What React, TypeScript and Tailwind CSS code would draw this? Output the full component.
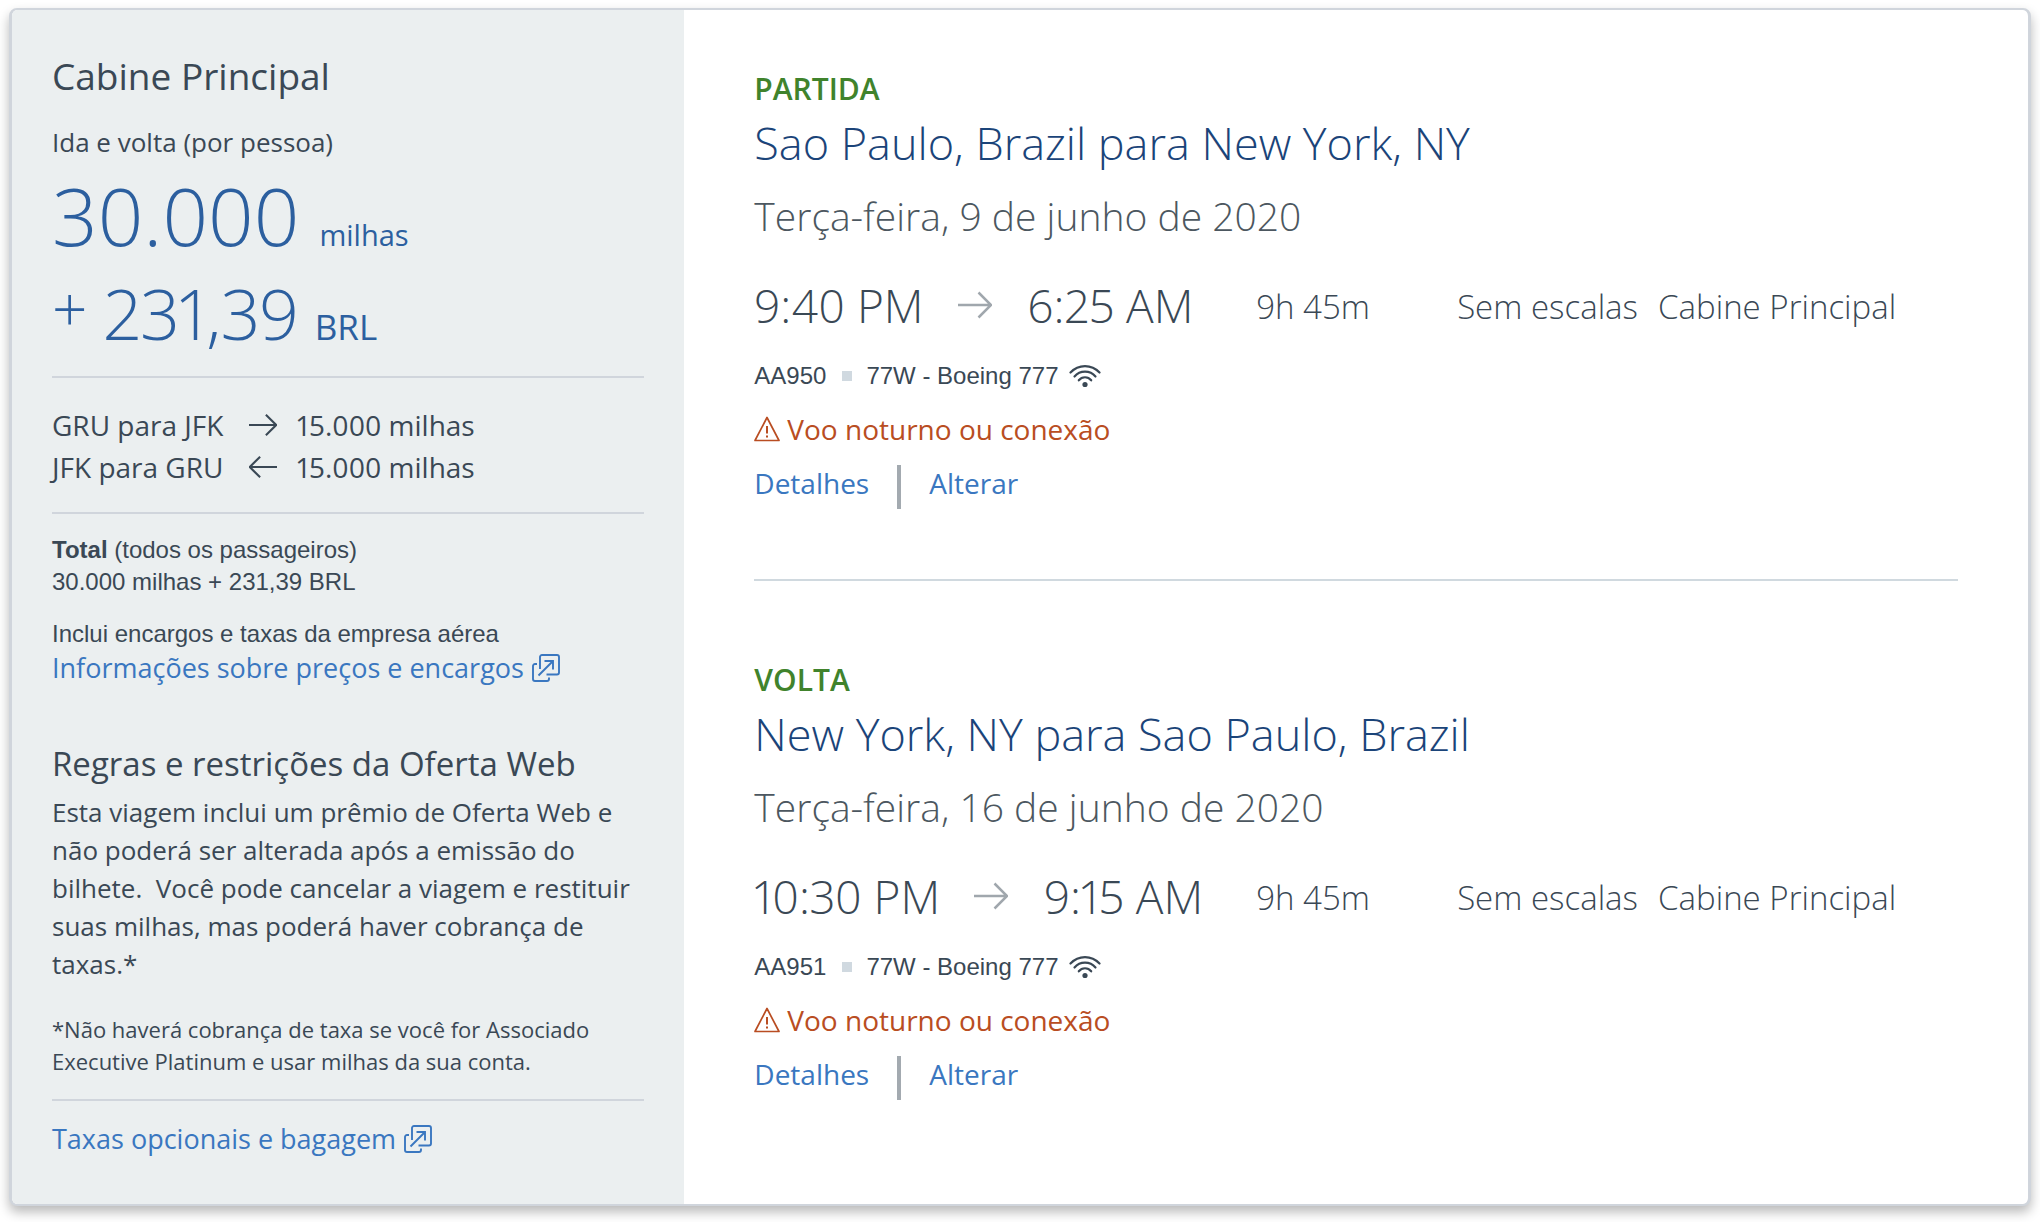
type IconProps = { className?: string };

function ArrowIcon({ className }: IconProps) {
  return (
    <svg viewBox="0 0 34 34" className={className} fill="none" stroke="currentColor" aria-hidden="true">
      <path d="M0 17H32.500M20.500 4.500L33 17L20.500 29.500" />
    </svg>
  );
}

function ExternalIcon() {
  return (
    <svg viewBox="0 0 28 28" className="size-7 shrink-0" fill="none" stroke="currentColor" strokeWidth="1.900" aria-hidden="true">
      <path d="M8 15V3a2 2 0 0 1 2-2H25a2 2 0 0 1 2 2V18.500a2 2 0 0 1-2 2H14.500" />
      <path d="M5 10H3a2 2 0 0 0-2 2V25a2 2 0 0 0 2 2H15a2 2 0 0 0 2-2V23.500" />
      <path d="M6.500 21.500L20.500 7.500M12.500 7H21V15.500" />
    </svg>
  );
}

function WifiIcon() {
  return (
    <svg viewBox="0 0 32 24" className="h-6 w-8 shrink-0" fill="none" stroke="currentColor" strokeWidth="2.200" strokeLinecap="round" role="img" aria-label="Wi-Fi">
      <path d="M1.500 8.500C9.500 0 22.500 0 30.500 8.500" />
      <path d="M5.500 12.500C11 6 21 6 26.500 12.500" />
      <path d="M9.800 16.300C13 12.200 19 12.200 22.200 16.300" />
      <circle cx="16" cy="20.500" r="2.600" fill="currentColor" stroke="none" />
    </svg>
  );
}

function WarningIcon() {
  return (
    <svg viewBox="0 0 26 26" className="size-[26px] shrink-0" fill="none" stroke="currentColor" strokeWidth="1.700" strokeLinejoin="round" aria-hidden="true">
      <path d="M13 1.500L25 24.500H1Z" />
      <path d="M13 10V17.500M13 19.500V21.500" strokeWidth="2" />
    </svg>
  );
}

type Flight = {
  label: string;
  route: string;
  date: string;
  departs: string;
  arrives: string;
  number: string;
};

const flights: Flight[] = [
  {
    label: 'PARTIDA',
    route: 'Sao Paulo, Brazil para New York, NY',
    date: 'Terça-feira, 9 de junho de 2020',
    departs: '9:40 PM',
    arrives: '6:25 AM',
    number: 'AA950',
  },
  {
    label: 'VOLTA',
    route: 'New York, NY para Sao Paulo, Brazil',
    date: 'Terça-feira, 16 de junho de 2020',
    departs: '10:30 PM',
    arrives: '9:15 AM',
    number: 'AA951',
  },
];

function FlightSection({ flight }: { flight: Flight }) {
  return (
    <section>
      <h2 className="text-[30px] leading-10 font-semibold text-[#40832c]">{flight.label}</h2>
      <h3 className="mt-1.5 text-[45px] leading-[56px] text-[#1b4479]">{flight.route}</h3>
      <p className="mt-5 text-[39px] leading-[50px] text-[#4c5760]">{flight.date}</p>
      <div className="mt-8 grid grid-cols-[502fr_201fr_201fr_300fr] items-center text-[33px] leading-[60px]">
        <div className="flex items-center text-[46px] proportional-nums">
          <span>{flight.departs}</span>
          <ArrowIcon className="mr-9 ml-[34px] size-[34px] stroke-[2.5] text-[#a0a7ad]" />
          <span>{flight.arrives}</span>
        </div>
        <span className="pt-1 whitespace-nowrap">9h 45m</span>
        <span className="pt-1 whitespace-nowrap">Sem escalas</span>
        <span className="pt-1 whitespace-nowrap">Cabine Principal</span>
      </div>
      <div className="mt-[23px] flex items-center font-['Liberation_Sans',Arial,sans-serif] text-[24px] leading-8 font-normal">
        <span>{flight.number}</span>
        <span className="mr-3.5 ml-4 size-2.5 bg-[#d0d9e0]" />
        <span className="mr-2.5">77W - Boeing 777</span>
        <WifiIcon />
      </div>
      <p className="mt-[17px] flex items-center gap-[7px] text-[28px] leading-10 font-normal text-[#b94d22]">
        <WarningIcon />
        Voo noturno ou conexão
      </p>
      <div className="mt-4 flex h-11 items-start text-[28px] leading-9 font-normal text-[#3a77c0]">
        <a href="#detalhes">Detalhes</a>
        <span className="mx-7 h-full w-1 bg-[#a3aab0]" />
        <a href="#alterar">Alterar</a>
      </div>
    </section>
  );
}

export default function App() {
  return (
    <main className="min-h-screen bg-white px-[9px] pt-2 pb-4 font-['Open_Sans','Noto_Sans',sans-serif] font-light text-[#3a4855]">
      <div className="flex overflow-hidden rounded-lg border-x-3 border-y-2 border-[#d0d5dc] bg-white shadow-[0_6px_12px_rgba(0,0,0,0.28)]">
        <aside className="w-[33.35%] shrink-0 bg-[#ebeff0] px-10 pt-[42px] pb-[47px] font-normal">
          <h2 className="text-[37px] leading-[48px]">Cabine Principal</h2>
          <p className="mt-[23px] text-[26px] leading-[38px]">Ida e volta (por pessoa)</p>
          <div className="text-[#2c5f9f]">
            <p className="mt-1.5 flex items-baseline gap-5 text-[80px] leading-[96px] font-light">
              30.000 <span className="text-[29px] leading-8 font-normal">milhas</span>
            </p>
            <p className="mt-0.5 flex items-baseline text-[70px] leading-[96px] font-light proportional-nums">
              <span className="mr-4 self-start text-[62px] leading-[86px]">+</span>
              231,39 <span className="ml-4 text-[35px] leading-8 font-normal">BRL</span>
            </p>
          </div>
          <hr className="mt-[15px] border-t-2 border-[#d0d5dc]" />
          <dl className="mt-[26px] grid grid-cols-[197px_28px_auto] items-center text-[28px] leading-[42px]">
            <dt>GRU para JFK</dt>
            <ArrowIcon className="size-7 stroke-[2.5]" />
            <dd className="ml-5 proportional-nums">15.000 milhas</dd>
            <dt>JFK para GRU</dt>
            <ArrowIcon className="size-7 rotate-180 stroke-[2.5]" />
            <dd className="ml-5 proportional-nums">15.000 milhas</dd>
          </dl>
          <hr className="mt-6 border-t-2 border-[#d0d5dc]" />
          <div className="mt-5 font-['Liberation_Sans',Arial,sans-serif] text-[24px] leading-8">
            <p>
              <strong className="font-bold">Total</strong> (todos os passageiros)
            </p>
            <p>30.000 milhas + 231,39 BRL</p>
            <p className="mt-5">Inclui encargos e taxas da empresa aérea</p>
          </div>
          <a href="#precos" className="flex items-center gap-2 text-[27px] leading-9 text-[#3a77c0]">
            Informações sobre preços e encargos <ExternalIcon />
          </a>
          <h3 className="mt-14 text-[33px] leading-[44px]">Regras e restrições da Oferta Web</h3>
          <p className="mt-[7px] text-[26px] leading-[38px]">
            Esta viagem inclui um prêmio de Oferta Web e não poderá ser alterada após a emissão do bilhete.&nbsp; Você pode cancelar a viagem e restituir suas milhas, mas poderá haver cobrança de taxas.*
          </p>
          <p className="mt-[30px] text-[22px] leading-8">
            *Não haverá cobrança de taxa se você for Associado Executive Platinum e usar milhas da sua conta.
          </p>
          <hr className="mt-[22px] border-t-2 border-[#d0d5dc]" />
          <a href="#taxas" className="mt-5 flex items-center gap-2 text-[27px] leading-9 text-[#3a77c0]">
            Taxas opcionais e bagagem <ExternalIcon />
          </a>
        </aside>
        <div className="min-w-0 flex-1 px-[70px] pt-[59px]">
          <FlightSection flight={flights[0]} />
          <hr className="mt-[70px] mb-[79px] border-t-2 border-[#d0d9df]" />
          <FlightSection flight={flights[1]} />
        </div>
      </div>
    </main>
  );
}
